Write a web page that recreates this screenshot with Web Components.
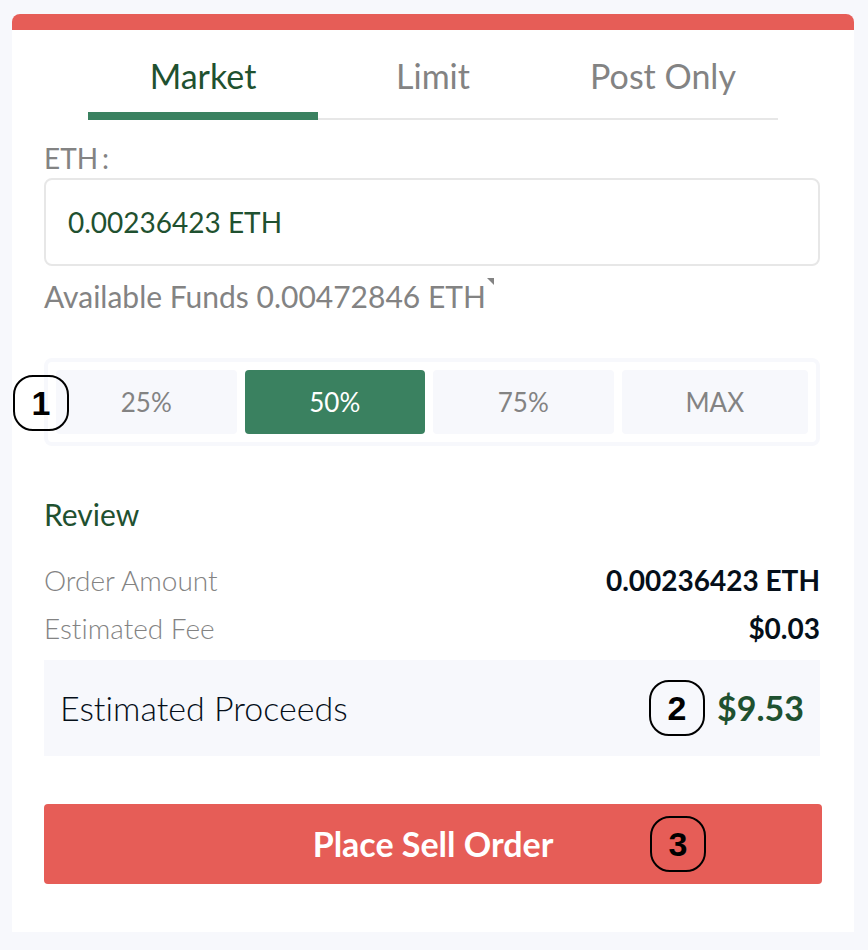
<!DOCTYPE html>
<html lang="en">
<head>
<meta charset="utf-8">
<meta name="viewport" content="width=device-width, initial-scale=1">
<title>Place Sell Order</title>
<style>
    :root{
        --red:#e65d57;
        --green:#3a8160;
        --dark-green:#1f5130;
        --grey:#838383;
        --line:#e7e7e7;
        --pale:#f7f8fc;
        --ink:#050f19;
    }
    *{box-sizing:border-box;}
    body{margin:0;padding:14px 14px 18px 12px;background:var(--pale);font-family:Lato,"Open Sans",sans-serif;font-variant-ligatures:none;color:var(--ink);}
</style>
</head>
<body>
<order-card>
    <order-tabs slot="tabs" items="Market,Limit,Post Only" active="Market"></order-tabs>
    <amount-field label="ETH" value="0.00236423 ETH">Available Funds 0.00472846 ETH</amount-field>
    <percent-picker items="25%,50%,75%,MAX" active="50%">
        <step-badge>1</step-badge>
    </percent-picker>
    <order-review heading="Review">
        <review-row label="Order Amount">0.00236423 ETH</review-row>
        <review-row label="Estimated Fee">$0.03</review-row>
        <review-row total label="Estimated Proceeds"><step-badge slot="badge">2</step-badge>$9.53</review-row>
    </order-review>
    <submit-button slot="action">Place Sell Order<step-badge slot="badge">3</step-badge></submit-button>
</order-card>

<script>
(()=>{

    // shared base: renders the markup into an open shadow root
    class BaseElement extends HTMLElement {
        constructor(){
            super();
            this.attachShadow({mode:'open'});
        }

        connectedCallback(){
            const template = document.createElement('template');
            template.innerHTML = `<style>
                *{box-sizing:border-box;}
                button,input{margin:0;font-family:inherit;}
                button{cursor:pointer;}
            </style>` + this.render();
            this.shadowRoot.replaceChildren(template.content.cloneNode(true));
            this.bind();
        }

        list(name){
            return (this.getAttribute(name) || '').split(',');
        }

        bind(){}
    }

    // card
    class OrderCard extends BaseElement {
        render(){
            return `
            <style>
                :host{display:block;background:#fff;border-top:16px solid var(--red);border-radius:8px 8px 0 0;padding-bottom:48px;}
                .tabs{padding:0 76px;}
                .body{padding:18px 34px 0 32px;}
                .action{padding:48px 32px 0;}
            </style>
            <div class="tabs"><slot name="tabs"></slot></div>
            <div class="body"><slot></slot></div>
            <div class="action"><slot name="action"></slot></div>`;
        }
    }

    // order type tabs
    class OrderTabs extends BaseElement {
        render(){
            const active = this.getAttribute('active');
            return `
            <style>
                :host{display:block;}
                .tabs{display:grid;grid-template-columns:repeat(3,1fr);box-shadow:inset 0 -2px var(--line);}
                button{height:90px;padding:10px 0 0;border:0;border-bottom:8px solid transparent;background:none;color:var(--grey);font-size:34px;line-height:40px;}
                button[aria-selected="true"]{color:var(--dark-green);border-color:var(--green);}
            </style>
            <div class="tabs" role="tablist">
                ${this.list('items').map(item => `<button type="button" role="tab" aria-selected="${item === active}">${item}</button>`).join('')}
            </div>`;
        }

        bind(){
            const tabs = this.shadowRoot.querySelectorAll('button');
            tabs.forEach(tab => tab.addEventListener('click', () => {
                tabs.forEach(item => item.setAttribute('aria-selected', item === tab));
            }));
        }
    }

    // amount input with the available funds below
    class AmountField extends BaseElement {
        render(){
            return `
            <style>
                :host{display:block;font-size:28px;line-height:40px;color:var(--grey);}
                label{display:flex;gap:4px;}
                input{display:block;width:100%;height:88px;padding:0 22px;border:2px solid var(--line);border-radius:8px;background:#fff;color:var(--dark-green);font-size:28px;outline:0;}
                .hint{display:flex;margin-top:10px;font-size:30px;}
                svg{margin-top:2px;}
            </style>
            <label for="amount"><span>${this.getAttribute('label')}</span><span>:</span></label>
            <input id="amount" type="text" value="${this.getAttribute('value')}">
            <div class="hint">
                <slot></slot>
                <svg width="8" height="8" viewBox="0 0 8 8" aria-hidden="true"><path d="M1 0h7v7z" fill="#838383"/></svg>
            </div>`;
        }
    }

    // share of the balance to sell
    class PercentPicker extends BaseElement {
        render(){
            const active = this.getAttribute('active');
            return `
            <style>
                :host{display:block;position:relative;margin-top:42px;}
                .group{display:flex;gap:8px;padding:8px;border:4px solid var(--pale);border-radius:8px;}
                button{flex:1 1 180px;height:64px;padding:0;border:0;border-radius:4px;background:var(--pale);color:var(--grey);font-size:26px;line-height:32px;}
                button:last-child{flex-basis:186px;}
                button[aria-pressed="true"]{background:var(--green);color:#fff;}
                ::slotted(step-badge){position:absolute;left:-31px;top:17px;}
            </style>
            <div class="group">
                ${this.list('items').map(item => `<button type="button" aria-pressed="${item === active}">${item}</button>`).join('')}
            </div>
            <slot></slot>`;
        }

        bind(){
            const buttons = this.shadowRoot.querySelectorAll('button');
            buttons.forEach(button => button.addEventListener('click', () => {
                buttons.forEach(item => item.setAttribute('aria-pressed', item === button));
            }));
        }
    }

    class OrderReview extends BaseElement {
        render(){
            return `
            <style>
                :host{display:block;margin-top:48px;}
                h2{margin:0 0 22px;color:var(--dark-green);font-size:30px;font-weight:400;line-height:40px;}
            </style>
            <h2>${this.getAttribute('heading')}</h2>
            <slot></slot>`;
        }
    }

    // label + value, "total" is the highlighted one
    class ReviewRow extends BaseElement {
        render(){
            return `
            <style>
                :host{display:flex;align-items:center;justify-content:space-between;height:48px;font-size:28px;line-height:40px;}
                .label{color:var(--grey);font-weight:300;}
                .value{display:flex;align-items:center;gap:12px;font-weight:700;}
                :host([total]){height:96px;margin-top:8px;padding:0 16px;background:var(--pale);font-size:34px;}
                :host([total]) .label{color:var(--ink);}
                :host([total]) .value{color:var(--dark-green);}
            </style>
            <span class="label">${this.getAttribute('label')}</span>
            <span class="value"><slot name="badge"></slot><span><slot></slot></span></span>`;
        }
    }

    class SubmitButton extends BaseElement {
        render(){
            return `
            <style>
                :host{display:block;position:relative;}
                button{display:block;width:100%;height:80px;padding:0;border:0;border-radius:4px;background:var(--red);color:#fff;font-size:34px;font-weight:700;line-height:40px;}
                ::slotted(step-badge){position:absolute;right:116px;top:12px;pointer-events:none;}
            </style>
            <button type="button"><slot></slot></button>
            <slot name="badge"></slot>`;
        }
    }

    // numbered marker
    class StepBadge extends BaseElement {
        render(){
            return `
            <style>
                :host{display:flex;align-items:center;justify-content:center;width:56px;height:56px;border:2px solid #000;border-radius:20px;box-sizing:border-box;color:#000;font:bold 34px/40px "Liberation Sans",Arial,sans-serif;}
            </style>
            <span><slot></slot></span>`;
        }
    }

    window.customElements.define('order-card',OrderCard);
    window.customElements.define('order-tabs',OrderTabs);
    window.customElements.define('amount-field',AmountField);
    window.customElements.define('percent-picker',PercentPicker);
    window.customElements.define('order-review',OrderReview);
    window.customElements.define('review-row',ReviewRow);
    window.customElements.define('submit-button',SubmitButton);
    window.customElements.define('step-badge',StepBadge);

})();
</script>
</body>
</html>
